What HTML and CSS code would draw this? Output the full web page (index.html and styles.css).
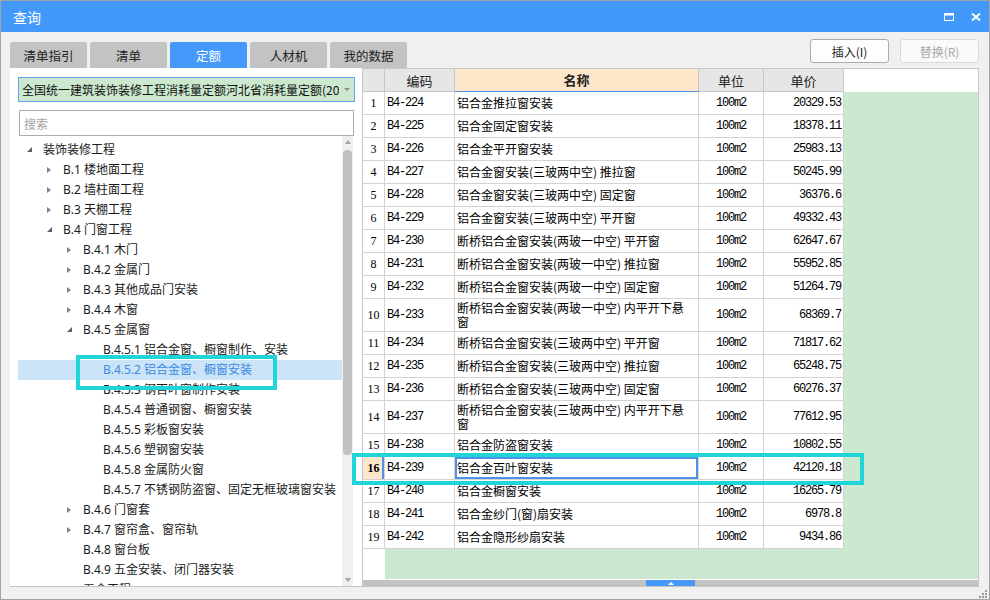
FILE: index.html
```html
<!DOCTYPE html>
<html>
<head>
<meta charset="utf-8">
<title>查询</title>
<link rel="stylesheet" href="styles.css">
</head>
<body>
<div class="window">
  <div class="titlebar">
    <span class="title">查询</span>
    <div class="winbtns">
      <svg width="10" height="8" viewBox="0 0 10 8"><rect x="0" y="0" width="10" height="2.5" fill="#fff"/><rect x="0.5" y="1" width="9" height="6.5" fill="none" stroke="#fff" stroke-width="1"/></svg>
      <svg width="10" height="8" viewBox="0 0 10 8"><path d="M1 0.5 L9 7.5 M9 0.5 L1 7.5" stroke="#fff" stroke-width="1.9" fill="none"/></svg>
    </div>
  </div>

  <div class="toolbar">
    <div class="tabs">
      <div class="tab">清单指引</div>
      <div class="tab">清单</div>
      <div class="tab active">定额</div>
      <div class="tab">人材机</div>
      <div class="tab">我的数据</div>
    </div>
    <div class="actions">
      <button class="btn">插入(I)</button>
      <button class="btn disabled">替换(R)</button>
    </div>
  </div>

  <div class="main">
    <div class="leftpane">
      <div class="select">
        <span class="select-text">全国统一建筑装饰装修工程消耗量定额河北省消耗量定额(2012)</span>
        <span class="caret"></span>
      </div>
      <div class="search">搜索</div>
      <div class="tree">
        <div class="tree-rows">
          <div class="node l0"><span class="tw open"></span>装饰装修工程</div>
          <div class="node l1"><span class="tw closed"></span>B.1 楼地面工程</div>
          <div class="node l1"><span class="tw closed"></span>B.2 墙柱面工程</div>
          <div class="node l1"><span class="tw closed"></span>B.3 天棚工程</div>
          <div class="node l1"><span class="tw open"></span>B.4 门窗工程</div>
          <div class="node l2"><span class="tw closed"></span>B.4.1 木门</div>
          <div class="node l2"><span class="tw closed"></span>B.4.2 金属门</div>
          <div class="node l2"><span class="tw closed"></span>B.4.3 其他成品门安装</div>
          <div class="node l2"><span class="tw closed"></span>B.4.4 木窗</div>
          <div class="node l2"><span class="tw open"></span>B.4.5 金属窗</div>
          <div class="node l3"><span class="tw"></span>B.4.5.1 铝合金窗、橱窗制作、安装</div>
          <div class="node l3 selected"><span class="tw"></span>B.4.5.2 铝合金窗、橱窗安装</div>
          <div class="node l3"><span class="tw"></span>B.4.5.3 钢百叶窗制作安装</div>
          <div class="node l3"><span class="tw"></span>B.4.5.4 普通钢窗、橱窗安装</div>
          <div class="node l3"><span class="tw"></span>B.4.5.5 彩板窗安装</div>
          <div class="node l3"><span class="tw"></span>B.4.5.6 塑钢窗安装</div>
          <div class="node l3"><span class="tw"></span>B.4.5.8 金属防火窗</div>
          <div class="node l3"><span class="tw"></span>B.4.5.7 不锈钢防盗窗、固定无框玻璃窗安装</div>
          <div class="node l2"><span class="tw closed"></span>B.4.6 门窗套</div>
          <div class="node l2"><span class="tw closed"></span>B.4.7 窗帘盒、窗帘轨</div>
          <div class="node l2"><span class="tw"></span>B.4.8 窗台板</div>
          <div class="node l2"><span class="tw"></span>B.4.9 五金安装、闭门器安装</div>
          <div class="node l2"><span class="tw"></span>五金工程</div>
        </div>
        <div class="vscroll">
          <div class="sb-btn"><span class="tri-up"></span></div>
          <div class="vthumb"></div>
          <div class="sb-fill"></div>
          <div class="sb-btn"><span class="tri-down"></span></div>
        </div>
      </div>
    </div>

    <div class="rightpane">
      <div class="grid">
        <div class="row head">
          <div class="cell c-num"></div>
          <div class="cell c-code">编码</div>
          <div class="cell c-name sorted">名称</div>
          <div class="cell c-unit">单位</div>
          <div class="cell c-price">单价</div>
        </div>
        <div class="row"><div class="cell c-num">1</div><div class="cell c-code">B4-224</div><div class="cell c-name">铝合金推拉窗安装</div><div class="cell c-unit">100m2</div><div class="cell c-price">20329.53</div></div>
        <div class="row"><div class="cell c-num">2</div><div class="cell c-code">B4-225</div><div class="cell c-name">铝合金固定窗安装</div><div class="cell c-unit">100m2</div><div class="cell c-price">18378.11</div></div>
        <div class="row"><div class="cell c-num">3</div><div class="cell c-code">B4-226</div><div class="cell c-name">铝合金平开窗安装</div><div class="cell c-unit">100m2</div><div class="cell c-price">25983.13</div></div>
        <div class="row"><div class="cell c-num">4</div><div class="cell c-code">B4-227</div><div class="cell c-name">铝合金窗安装(三玻两中空) 推拉窗</div><div class="cell c-unit">100m2</div><div class="cell c-price">50245.99</div></div>
        <div class="row"><div class="cell c-num">5</div><div class="cell c-code">B4-228</div><div class="cell c-name">铝合金窗安装(三玻两中空) 固定窗</div><div class="cell c-unit">100m2</div><div class="cell c-price">36376.6</div></div>
        <div class="row"><div class="cell c-num">6</div><div class="cell c-code">B4-229</div><div class="cell c-name">铝合金窗安装(三玻两中空) 平开窗</div><div class="cell c-unit">100m2</div><div class="cell c-price">49332.43</div></div>
        <div class="row"><div class="cell c-num">7</div><div class="cell c-code">B4-230</div><div class="cell c-name">断桥铝合金窗安装(两玻一中空) 平开窗</div><div class="cell c-unit">100m2</div><div class="cell c-price">62647.67</div></div>
        <div class="row"><div class="cell c-num">8</div><div class="cell c-code">B4-231</div><div class="cell c-name">断桥铝合金窗安装(两玻一中空) 推拉窗</div><div class="cell c-unit">100m2</div><div class="cell c-price">55952.85</div></div>
        <div class="row"><div class="cell c-num">9</div><div class="cell c-code">B4-232</div><div class="cell c-name">断桥铝合金窗安装(两玻一中空) 固定窗</div><div class="cell c-unit">100m2</div><div class="cell c-price">51264.79</div></div>
        <div class="row tall"><div class="cell c-num">10</div><div class="cell c-code">B4-233</div><div class="cell c-name">断桥铝合金窗安装(两玻一中空) 内平开下悬<br>窗</div><div class="cell c-unit">100m2</div><div class="cell c-price">68369.7</div></div>
        <div class="row"><div class="cell c-num">11</div><div class="cell c-code">B4-234</div><div class="cell c-name">断桥铝合金窗安装(三玻两中空) 平开窗</div><div class="cell c-unit">100m2</div><div class="cell c-price">71817.62</div></div>
        <div class="row"><div class="cell c-num">12</div><div class="cell c-code">B4-235</div><div class="cell c-name">断桥铝合金窗安装(三玻两中空) 推拉窗</div><div class="cell c-unit">100m2</div><div class="cell c-price">65248.75</div></div>
        <div class="row"><div class="cell c-num">13</div><div class="cell c-code">B4-236</div><div class="cell c-name">断桥铝合金窗安装(三玻两中空) 固定窗</div><div class="cell c-unit">100m2</div><div class="cell c-price">60276.37</div></div>
        <div class="row tall"><div class="cell c-num">14</div><div class="cell c-code">B4-237</div><div class="cell c-name">断桥铝合金窗安装(三玻两中空) 内平开下悬<br>窗</div><div class="cell c-unit">100m2</div><div class="cell c-price">77612.95</div></div>
        <div class="row"><div class="cell c-num">15</div><div class="cell c-code">B4-238</div><div class="cell c-name">铝合金防盗窗安装</div><div class="cell c-unit">100m2</div><div class="cell c-price">10802.55</div></div>
        <div class="row current"><div class="cell c-num">16</div><div class="cell c-code">B4-239</div><div class="cell c-name focus">铝合金百叶窗安装</div><div class="cell c-unit">100m2</div><div class="cell c-price">42120.18</div></div>
        <div class="row"><div class="cell c-num">17</div><div class="cell c-code">B4-240</div><div class="cell c-name">铝合金橱窗安装</div><div class="cell c-unit">100m2</div><div class="cell c-price">16265.79</div></div>
        <div class="row"><div class="cell c-num">18</div><div class="cell c-code">B4-241</div><div class="cell c-name">铝合金纱门(窗)扇安装</div><div class="cell c-unit">100m2</div><div class="cell c-price">6978.8</div></div>
        <div class="row"><div class="cell c-num">19</div><div class="cell c-code">B4-242</div><div class="cell c-name">铝合金隐形纱扇安装</div><div class="cell c-unit">100m2</div><div class="cell c-price">9434.86</div></div>
      </div>
      <div class="hscroll"><div class="hthumb"><span class="tri-up white"></span></div></div>
    </div>
  </div>

  <div class="statusbar">
    <svg width="8" height="8" viewBox="0 0 8 8" fill="#9a9a9a"><rect x="6" y="0" width="2" height="2"/><rect x="3" y="3" width="2" height="2"/><rect x="6" y="3" width="2" height="2"/><rect x="0" y="6" width="2" height="2"/><rect x="3" y="6" width="2" height="2"/><rect x="6" y="6" width="2" height="2"/></svg>
  </div>

  <div class="mark mark-tree"></div>
  <div class="mark mark-grid"></div>
</div>
</body>
</html>
```

FILE: styles.css
```css
* { box-sizing: border-box; }
html, body { margin: 0; padding: 0; }
body {
  width: 990px;
  height: 600px;
  overflow: hidden;
  background: #fff;
  font-family: "Noto Sans", "Noto Sans CJK SC", sans-serif;
  font-size: 12px;
  color: #1e1e1e;
}

.window {
  position: relative;
  width: 990px;
  height: 600px;
  border: 1px solid #a3a3a3;
  background: #f0f0f0;
  display: flex;
  flex-direction: column;
}

/* title bar */
.titlebar {
  flex: none;
  height: 31px;
  background: #4398fb;
  color: #fff;
  display: flex;
  align-items: center;
  justify-content: space-between;
  padding: 0 8px 0 12px;
}
.title {
  font-family: "Noto Sans CJK SC", sans-serif;
  font-size: 14px;
  line-height: 1;
}
.winbtns { display: flex; align-items: center; gap: 17px; }
.winbtns svg { display: block; }

/* toolbar with tabs and buttons */
.toolbar {
  flex: none;
  height: 36px;
  padding: 0 10px 0 9px;
  display: flex;
  justify-content: space-between;
}
.tabs {
  align-self: flex-end;
  display: flex;
  gap: 3px;
}
.tab {
  width: 77px;
  height: 26px;
  background: #c3c3c3;
  border-radius: 2px 2px 0 0;
  display: flex;
  align-items: center;
  justify-content: center;
  font-family: "Noto Sans CJK SC", sans-serif;
  font-size: 12.5px;
  color: #222;
}
.tab.active { background: #4499fb; color: #fff; }

.actions {
  align-self: flex-start;
  margin-top: 7px;
  display: flex;
  gap: 11px;
}
.btn {
  width: 79px;
  height: 24px;
  padding: 0;
  border: 1px solid #acacac;
  border-radius: 3px;
  background: #fdfdfd;
  font-family: "Noto Sans CJK SC", sans-serif;
  font-size: 12px;
  color: #1e1e1e;
}
.btn.disabled { border-color: #d9d9d9; color: #a9a9a9; background: #fafafa; }

/* main area */
.main {
  flex: none;
  height: 519px;
  margin: 0 10px 0 9px;
  border-bottom: 1px solid #c4c4c4;
  display: flex;
}

/* left pane */
.leftpane {
  width: 352px;
  flex: none;
  background: #fff;
  padding: 9px 7px 0 8px;
  display: flex;
  flex-direction: column;
}
.select {
  height: 25px;
  flex: none;
  border: 1px solid #62a4eb;
  background: #cce8cf;
  display: flex;
  align-items: center;
  padding: 0 0 0 3px;
  font-family: "Noto Sans CJK SC", sans-serif;
  font-size: 12px;
  color: #111;
}
.select-text { flex: 1; overflow: hidden; white-space: nowrap; }
.caret {
  width: 15px;
  height: 23px;
  flex: none;
  display: flex;
  align-items: center;
  justify-content: center;
}
.caret::before {
  content: "";
  border-left: 3px solid transparent;
  border-right: 3px solid transparent;
  border-top: 3px solid #8a8a8a;
}
.search {
  height: 26px;
  flex: none;
  margin: 8px 1px 0;
  border: 1px solid #acacac;
  padding-left: 4px;
  display: flex;
  align-items: center;
  font-family: "Noto Sans CJK SC", sans-serif;
  font-size: 12px;
  color: #a2a2a2;
}

.tree {
  flex: 1;
  min-height: 0;
  display: flex;
  overflow: hidden;
}
.tree-rows {
  width: 324px;
  flex: none;
  padding-top: 4px;
  overflow: hidden;
}
.node {
  height: 20px;
  display: flex;
  align-items: center;
  white-space: nowrap;
  color: #1a1a1a;
  line-height: 20px;
}
.node.l0 { padding-left: 9px; }
.node.l1 { padding-left: 29px; }
.node.l2 { padding-left: 49px; }
.node.l3 { padding-left: 69px; }
.node.selected { background: #cce4f7; color: #3b8be3; }
.tw {
  width: 16px;
  height: 20px;
  flex: none;
  position: relative;
}
.tw.closed::before {
  content: "";
  position: absolute;
  left: 0;
  top: 6.5px;
  border-left: 4px solid #818181;
  border-top: 3.5px solid transparent;
  border-bottom: 3.5px solid transparent;
}
.tw.open::before {
  content: "";
  position: absolute;
  left: 0;
  top: 7px;
  border-right: 5px solid #5f5f5f;
  border-top: 5px solid transparent;
}

.vscroll {
  width: 11px;
  flex: none;
  background: #f0f0f0;
  display: flex;
  flex-direction: column;
  align-items: center;
}
.sb-btn {
  height: 12px;
  width: 11px;
  flex: none;
  display: flex;
  align-items: center;
  justify-content: center;
}
.vthumb {
  width: 9px;
  height: 305px;
  flex: none;
  margin-top: 2px;
  background: #c2c2c2;
  border-radius: 4px;
}
.sb-fill { flex: 1; }
.tri-up {
  width: 0; height: 0;
  border-left: 3.5px solid transparent;
  border-right: 3.5px solid transparent;
  border-bottom: 4px solid #a3a3a3;
}
.tri-down {
  width: 0; height: 0;
  border-left: 3.5px solid transparent;
  border-right: 3.5px solid transparent;
  border-top: 4px solid #a3a3a3;
}
.tri-up.white {
  border-left-width: 3px;
  border-right-width: 3px;
  border-bottom: 3px solid #fff;
}

/* right pane / grid */
.rightpane {
  flex: 1;
  min-width: 0;
  background: #fff;
  border: 1px solid #c8c8c8;
  border-bottom: none;
  display: flex;
  flex-direction: column;
}
.grid {
  height: 510px;
  flex: none;
  overflow: hidden;
  background: linear-gradient(90deg, #fff 0, #fff 22px, #cce8cf 22px);
  font-family: "Noto Sans CJK SC", sans-serif;
  font-size: 12px;
  color: #000;
}
.row { display: flex; height: 23px; }
.row.tall { height: 33px; }
.cell {
  height: 100%;
  flex: none;
  background: #fff;
  border-right: 1px solid #d3d3d3;
  border-bottom: 1px solid #d3d3d3;
  display: flex;
  align-items: center;
  white-space: nowrap;
  overflow: hidden;
}
.c-num {
  width: 22px;
  justify-content: center;
  font-family: "Liberation Serif", serif;
  font-size: 12px;
}
.c-code, .c-unit, .c-price {
  font-family: "Liberation Mono", monospace;
  font-size: 12px;
  letter-spacing: -1.2px;
}
.c-code {
  width: 70px;
  padding-left: 2px;
}
.c-name {
  width: 244px;
  padding-left: 2px;
  line-height: 14px;
}
.c-unit {
  width: 65px;
  justify-content: center;
}
.c-price {
  width: 80px;
  justify-content: flex-end;
  padding-right: 2px;
}

.row.head { background: #fff; }
.row.head .cell {
  background: #e6e6e6;
  border-color: #c6c6c6;
  justify-content: center;
  padding: 0;
  font-family: "Noto Sans CJK SC", sans-serif;
  font-size: 13px;
  letter-spacing: 0;
  color: #222;
}
.row.head .cell.sorted {
  background: #fde6c9;
  border-bottom-color: #4f94e6;
  font-weight: bold;
}

.row.current .c-num {
  background: #fde6c9;
  font-weight: bold;
  box-shadow: inset -2px 0 0 #4d94e8;
}
.cell.focus { box-shadow: inset 0 0 0 2px #4d94e8; }

.hscroll {
  height: 6px;
  flex: none;
  margin-top: 1px;
  background: #c3c3c3;
  display: flex;
  justify-content: center;
}
.hthumb {
  width: 49px;
  height: 6px;
  background: #4598f8;
  display: flex;
  align-items: center;
  justify-content: center;
}

/* status bar with resize grip */
.statusbar {
  flex: 1;
  display: flex;
  justify-content: flex-end;
  align-items: flex-end;
  padding: 0 2px 1px 0;
}
.statusbar svg { display: block; }

/* annotation highlight boxes drawn over the UI */
.mark {
  position: absolute;
  border: 4px solid #1fd5d8;
  pointer-events: none;
}
.mark-tree { left: 75px; top: 354px; width: 201px; height: 35px; }
.mark-grid { left: 351px; top: 452px; width: 512px; height: 32px; }
```
